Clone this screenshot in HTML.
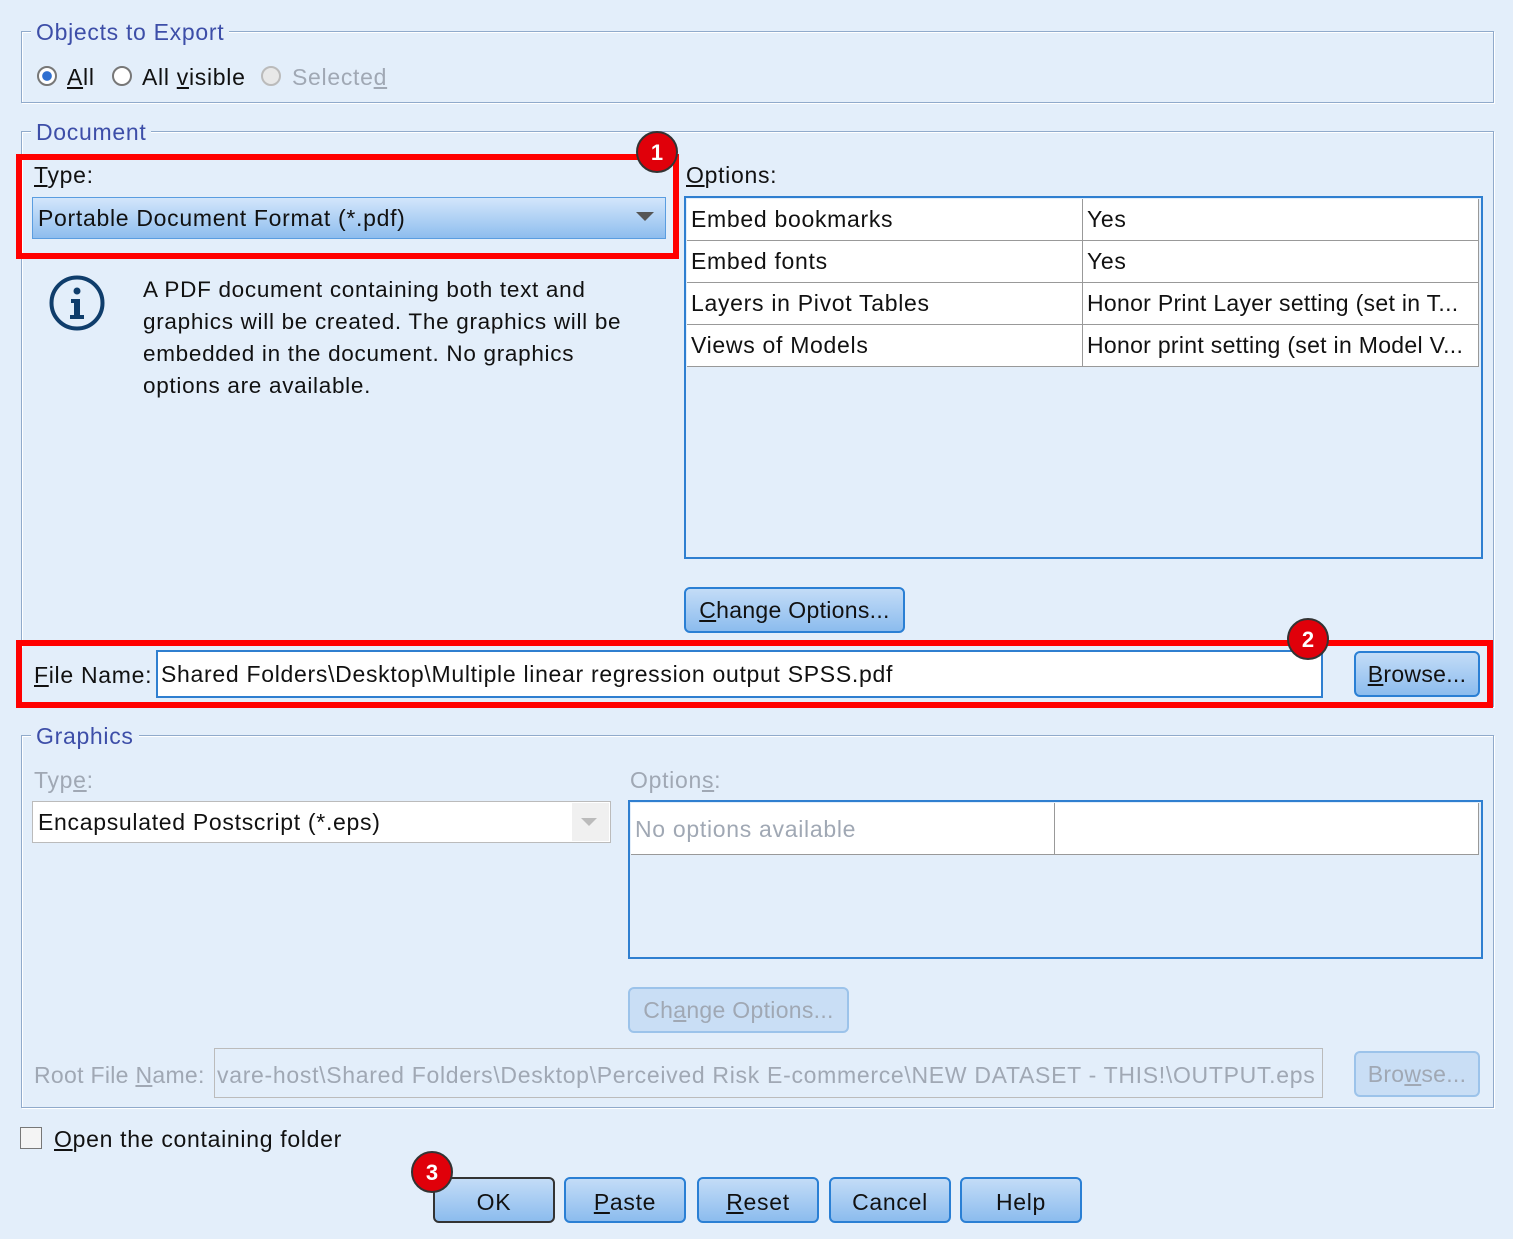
<!DOCTYPE html>
<html><head><style>
body{margin:0;width:1513px;height:1239px;background:#e3eefa;font-family:"Liberation Sans",sans-serif;font-size:23px;color:#111;position:relative;overflow:hidden;letter-spacing:0.7px}
.a{position:absolute;white-space:nowrap}
.grp{position:absolute;border:1px solid #90aacb;box-shadow:inset 1px 1px 0 #fff,1px 1px 0 #fff}
.gt{position:absolute;background:#e3eefa;color:#3d4ea8;padding:0 5px;font-size:23px}
.btn{position:absolute;border:2px solid #2a7fd4;border-radius:6px;background:linear-gradient(#c3dcf7,#8cbcee);text-align:center;box-sizing:border-box}
.dis{color:#a0a8b4}
.cell{position:absolute;border-bottom:1px solid #999;box-sizing:border-box;padding-left:4px;line-height:40px;height:42px;background:#fff}
.red{position:absolute;border:6px solid #f00;box-sizing:border-box}
.badge{position:absolute;width:42px;height:42px;border-radius:50%;background:#e0000a;border:2px solid #333;color:#fff;font-weight:bold;text-align:center;line-height:40px;font-size:22px;box-sizing:border-box;letter-spacing:0}
u{text-decoration:underline}
.radio{position:absolute;width:20px;height:20px;border-radius:50%;border:2px solid #777;background:#fff;box-sizing:border-box}
</style></head><body>

<div class="grp" style="left:21px;top:31px;width:1471px;height:70px"></div>
<div class="gt" style="left:31px;top:19px">Objects to Export</div>
<div class="radio" style="left:37px;top:66px;background:radial-gradient(#2f6fd0 40%,#fff 45%)"></div>
<div class="a" style="left:67px;top:64px"><u>A</u>ll</div>
<div class="radio" style="left:112px;top:66px"></div>
<div class="a" style="left:142px;top:64px">All <u>v</u>isible</div>
<div class="radio" style="left:261px;top:66px;border-color:#bbb;background:#e8e8e8"></div>
<div class="a dis" style="left:292px;top:64px">Selecte<u>d</u></div>

<div class="grp" style="left:21px;top:131px;width:1471px;height:574px"></div>
<div class="gt" style="left:31px;top:119px">Document</div>
<div class="a" style="left:34px;top:162px"><u>T</u>ype:</div>
<div class="a" style="left:32px;top:197px;width:634px;height:42px;border:1px solid #5a9de0;background:linear-gradient(#d3e6fb,#8ebdee);box-sizing:border-box;padding-left:5px;line-height:40px">Portable Document Format (*.pdf)</div>
<div class="a" style="left:636px;top:212px;width:0;height:0;border-left:9px solid transparent;border-right:9px solid transparent;border-top:9px solid #555"></div>
<svg class="a" style="left:48px;top:274px" width="58" height="58" viewBox="0 0 58 58"><circle cx="29" cy="29" r="25.5" fill="none" stroke="#0f3d6b" stroke-width="4"/><circle cx="29" cy="17" r="3.5" fill="#0f3d6b"/><path d="M23 25h9v16h4v4H22v-4h4V29h-3z" fill="#0f3d6b"/></svg>
<div class="a" style="left:143px;top:274px;line-height:32px;font-size:22.5px">A PDF document containing both text and<br>graphics will be created. The graphics will be<br>embedded in the document. No graphics<br>options are available.</div>

<div class="a" style="left:686px;top:162px"><u>O</u>ptions:</div>
<div class="a" style="left:684px;top:196px;width:799px;height:363px;border:2px solid #2f7fd0;background:#e3eefa;box-sizing:border-box"></div>
<div class="a" style="left:687px;top:199px;width:792px;height:168px;background:#fff"></div>
<div class="cell" style="left:687px;top:199px;width:396px;border-right:1px solid #999">Embed bookmarks</div>
<div class="cell" style="left:1083px;top:199px;width:396px;border-right:1px solid #999">Yes</div>
<div class="cell" style="left:687px;top:241px;width:396px;border-right:1px solid #999">Embed fonts</div>
<div class="cell" style="left:1083px;top:241px;width:396px;border-right:1px solid #999">Yes</div>
<div class="cell" style="left:687px;top:283px;width:396px;border-right:1px solid #999">Layers in Pivot Tables</div>
<div class="cell" style="left:1083px;top:283px;width:396px;border-right:1px solid #999;overflow:hidden;letter-spacing:0.3px">Honor Print Layer setting (set in T...</div>
<div class="cell" style="left:687px;top:325px;width:396px;border-right:1px solid #999">Views of Models</div>
<div class="cell" style="left:1083px;top:325px;width:396px;border-right:1px solid #999;overflow:hidden;letter-spacing:0.3px">Honor print setting (set in Model V...</div>

<div class="btn" style="left:684px;top:587px;width:221px;height:46px;line-height:42px;letter-spacing:0.3px"><u>C</u>hange Options...</div>

<div class="a" style="left:20px;top:648px;width:1470px;height:56px;background:#e3eefa"></div>
<div class="a" style="left:34px;top:662px"><u>F</u>ile Name:</div>
<div class="a" style="left:156px;top:650px;width:1167px;height:48px;border:2px solid #2f7fd0;background:#fff;box-sizing:border-box;padding-left:3px;line-height:44px">Shared Folders\Desktop\Multiple linear regression output SPSS.pdf</div>
<div class="btn" style="left:1354px;top:651px;width:126px;height:46px;line-height:42px;letter-spacing:0.3px"><u>B</u>rowse...</div>

<div class="grp" style="left:21px;top:735px;width:1471px;height:371px"></div>
<div class="gt" style="left:31px;top:723px">Graphics</div>
<div class="a dis" style="left:34px;top:767px">Typ<u>e</u>:</div>
<div class="a" style="left:32px;top:801px;width:579px;height:42px;border:1px solid #bbb;background:#fff;box-sizing:border-box;padding-left:5px;line-height:40px">Encapsulated Postscript (*.eps)</div>
<div class="a" style="left:572px;top:803px;width:37px;height:38px;background:#f0f0f0"></div>
<div class="a" style="left:581px;top:818px;width:0;height:0;border-left:8px solid transparent;border-right:8px solid transparent;border-top:8px solid #bbb"></div>
<div class="a dis" style="left:630px;top:767px">Option<u>s</u>:</div>
<div class="a" style="left:628px;top:800px;width:855px;height:159px;border:2px solid #2f7fd0;box-sizing:border-box"></div>
<div class="cell dis" style="left:631px;top:803px;width:424px;height:52px;line-height:52px;border-right:1px solid #999">No options available</div>
<div class="cell" style="left:1055px;top:803px;width:424px;height:52px;border-right:1px solid #999"></div>
<div class="btn dis" style="left:628px;top:987px;width:221px;height:46px;line-height:42px;border-color:#9cc3ea;background:#c9def5;letter-spacing:0.3px">Ch<u>a</u>nge Options...</div>
<div class="a dis" style="left:34px;top:1062px;letter-spacing:0.3px">Root File <u>N</u>ame:</div>
<div class="a dis" style="left:214px;top:1048px;width:1109px;height:50px;border:1px solid #bbb;box-sizing:border-box;padding-left:2px;line-height:52px;overflow:hidden">vare-host\Shared Folders\Desktop\Perceived Risk E-commerce\NEW DATASET - THIS!\OUTPUT.eps</div>
<div class="btn dis" style="left:1354px;top:1051px;width:126px;height:46px;line-height:42px;border-color:#9cc3ea;background:#c9def5;letter-spacing:0.3px">Bro<u>w</u>se...</div>

<div class="a" style="left:20px;top:1127px;width:22px;height:22px;border:1px solid #777;background:#f4f4f4;box-sizing:border-box"></div>
<div class="a" style="left:54px;top:1126px"><u>O</u>pen the containing folder</div>

<div class="btn" style="left:433px;top:1177px;width:122px;height:46px;line-height:46px;border-color:#333">OK</div>
<div class="btn" style="left:564px;top:1177px;width:122px;height:46px;line-height:46px"><u>P</u>aste</div>
<div class="btn" style="left:697px;top:1177px;width:122px;height:46px;line-height:46px"><u>R</u>eset</div>
<div class="btn" style="left:829px;top:1177px;width:122px;height:46px;line-height:46px">Cancel</div>
<div class="btn" style="left:960px;top:1177px;width:122px;height:46px;line-height:46px">Help</div>

<div class="red" style="left:16px;top:154px;width:663px;height:105px"></div>
<div class="red" style="left:16px;top:640px;width:1477px;height:68px"></div>
<div class="badge" style="left:636px;top:131px">1</div>
<div class="badge" style="left:1287px;top:618px">2</div>
<div class="badge" style="left:411px;top:1151px">3</div>
</body></html>
